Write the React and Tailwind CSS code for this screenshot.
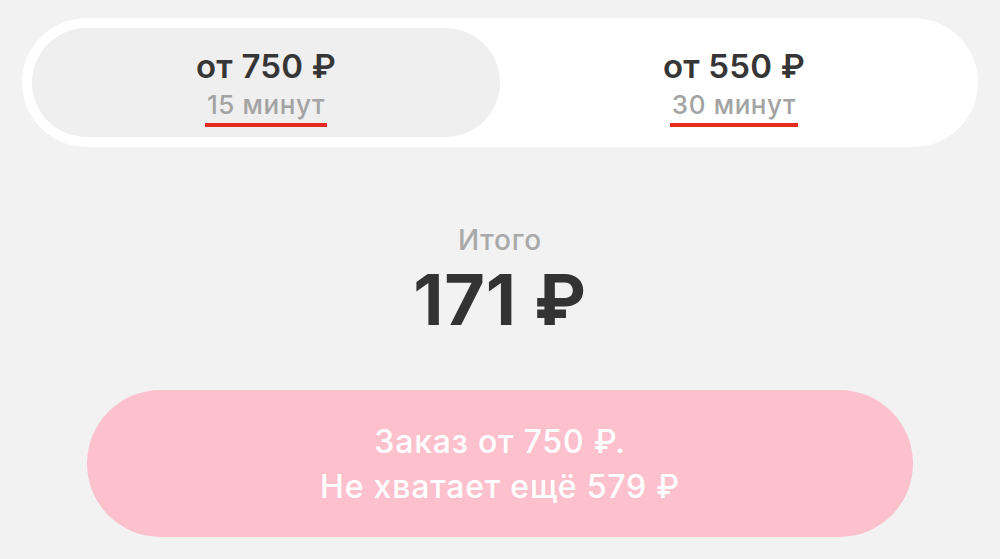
import React, { useState } from 'react';

const options = [
    { price: 'от 750 ₽', time: '15 минут' },
    { price: 'от 550 ₽', time: '30 минут' },
];

const DeliveryOption = ({ option, active, onClick }) => (
    <button
        onClick={onClick}
        className={`flex-1 flex flex-col items-center pt-[18px] rounded-full ${active ? 'bg-[#efefef]' : 'bg-white'}`}
    >
        <span className="text-[33px] leading-[40px] font-semibold text-[#363636] tracking-[0.2px]">
            {option.price}
        </span>
        <span className="mt-[4px] text-[26px] leading-[30px] font-medium text-[#a3a3a3] tracking-[0.6px] border-b-4 border-[#e42d1f] pb-[3px] px-[2px]">
            {option.time}
        </span>
    </button>
);

const App = () => {
    const [selected, setSelected] = useState(0);

    return (
        <div className="min-h-screen bg-[#f2f2f2] px-[22px] pt-[18px] font-['Inter','Liberation_Sans',sans-serif]">
            {/* Delivery speed switch */}
            <div className="flex h-[129px] rounded-full bg-white p-[10px]">
                {options.map((option, i) => (
                    <DeliveryOption
                        key={option.time}
                        option={option}
                        active={selected === i}
                        onClick={() => setSelected(i)}
                    />
                ))}
            </div>

            {/* Total */}
            <div className="flex flex-col items-center mt-[79px]">
                <span className="text-[28px] leading-[28px] font-medium text-[#a9a9a9] tracking-[0.8px]">Итого</span>
                <span className="mt-[8px] text-[70px] leading-[76px] font-bold text-[#333333] tracking-[0.8px]">171 ₽</span>
            </div>

            <div className="px-[65px] mt-[52px]">
                <button
                    disabled
                    className="w-full h-[147px] rounded-full bg-[#fdc1ce] flex flex-col items-center justify-center text-white text-[32px] leading-[45px] font-medium tracking-[0.8px]"
                >
                    <span>Заказ от 750 ₽.</span>
                    <span>Не хватает ещё 579 ₽</span>
                </button>
            </div>
        </div>
    );
};

export default App;
